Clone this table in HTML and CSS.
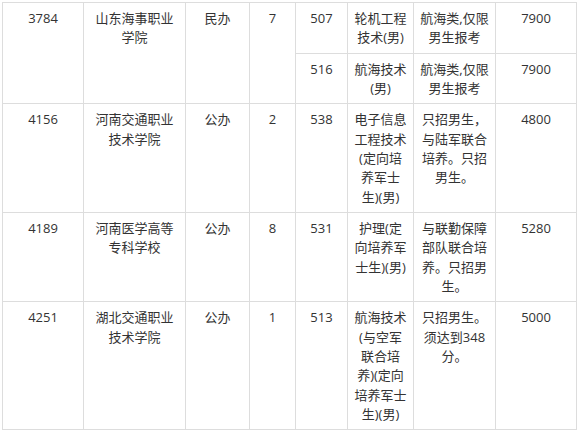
FILE: index.html
```html
<!DOCTYPE html>
<html lang="zh-CN">
<head>
<meta charset="utf-8">
<title>院校计划</title>
<link rel="stylesheet" href="styles.css">
</head>
<body>
<div class="table">
  <div class="c span2">3784</div>
  <div class="c span2">山东海事职业学院</div>
  <div class="c span2">民办</div>
  <div class="c span2">7</div>
  <div class="c">507</div>
  <div class="c">轮机工程技术(男)</div>
  <div class="c">航海类,仅限男生报考</div>
  <div class="c">7900</div>
  <div class="c">516</div>
  <div class="c">航海技术(男)</div>
  <div class="c">航海类,仅限男生报考</div>
  <div class="c">7900</div>

  <div class="c">4156</div>
  <div class="c">河南交通职业技术学院</div>
  <div class="c">公办</div>
  <div class="c">2</div>
  <div class="c">538</div>
  <div class="c">电子信息工程技术(定向培养军士生)(男)</div>
  <div class="c">只招男生，与陆军联合培养。只招男生。</div>
  <div class="c">4800</div>

  <div class="c">4189</div>
  <div class="c">河南医学高等专科学校</div>
  <div class="c">公办</div>
  <div class="c">8</div>
  <div class="c">531</div>
  <div class="c">护理(定向培养军士生)(男)</div>
  <div class="c">与联勤保障部队联合培养。只招男生。</div>
  <div class="c">5280</div>

  <div class="c">4251</div>
  <div class="c">湖北交通职业技术学院</div>
  <div class="c">公办</div>
  <div class="c">1</div>
  <div class="c">513</div>
  <div class="c">航海技术(与空军联合培养)(定向培养军士生)(男)</div>
  <div class="c">只招男生。须达到348分。</div>
  <div class="c">5000</div>
</div>
</body>
</html>
```
FILE: styles.css
```css
html, body {
  margin: 0;
  padding: 0;
  background: #fff;
}
body {
  padding: 2px 0 0 2px;
  font-family: "Open Sans", "Noto Sans CJK SC", sans-serif;
  font-size: 13px;
  color: #333;
}
.table {
  display: grid;
  grid-template-columns: 80px 101px 63px 45px 51px 65px 81px 80px;
  gap: 1px;
  padding: 1px;
  background: #dddddd;
  width: max-content;
}
.c {
  background: #fff;
  text-align: center;
  line-height: 19.33px;
  padding: 6px 6px 5px;
  line-break: strict;
}
.span2 {
  grid-row: span 2;
}
```
